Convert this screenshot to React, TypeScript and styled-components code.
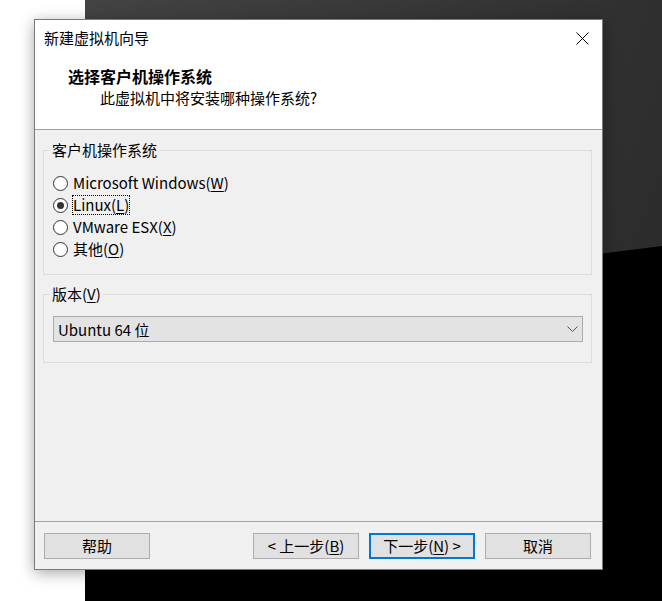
import React from "react";
import styled, { createGlobalStyle } from "styled-components";

const GlobalStyle = createGlobalStyle`
  html, body { margin: 0; padding: 0; background: #ffffff; }
  body { overflow: hidden; }
`;

const FONT = `"Noto Sans CJK SC", "Noto Sans", sans-serif`;

const Desktop = styled.div`
  position: relative;
  width: 662px;
  height: 601px;
  overflow: hidden;
  background: #ffffff;
  font-family: ${FONT};
`;

const Wallpaper = styled.svg`
  position: absolute;
  left: 85px;
  top: 0;
  display: block;
`;

const Window = styled.div`
  position: absolute;
  left: 34px;
  top: 19px;
  width: 569px;
  height: 551px;
  box-sizing: border-box;
  border: 1px solid #7a7a7a;
  background: #f0f0f0;
  box-shadow: 0 3px 14px rgba(0, 0, 0, 0.35);
  display: flex;
  flex-direction: column;
  font-size: 15px;
  color: #000;
`;

const TitleBar = styled.div`
  height: 36px;
  background: #ffffff;
  display: flex;
  align-items: center;
  justify-content: space-between;
  padding-left: 9px;
`;

const TitleText = styled.span`
  line-height: 20px;
`;

const CloseBtn = styled.div`
  width: 40px;
  height: 36px;
  display: flex;
  align-items: center;
  justify-content: center;
`;

const Header = styled.div`
  height: 73px;
  background: #ffffff;
  border-bottom: 1px solid #a0a0a0;
`;

const Heading = styled.div`
  margin: 10px 0 0 33px;
  font-size: 16px;
  font-weight: bold;
  line-height: 20px;
`;

const SubHeading = styled.div`
  margin: 2px 0 0 65px;
  line-height: 20px;
`;

const Body = styled.div`
  flex: 1;
  padding: 10px 10px 0 8px;
  display: flex;
  flex-direction: column;
`;

const Group = styled.fieldset<{ $gapTop?: number; $padBottom: number }>`
  margin: ${(p) => p.$gapTop ?? 0}px 0 0 0;
  border: 1px solid #dcdcdc;
  padding: 12px 8px ${(p) => p.$padBottom}px 9px;
  min-width: 0;
`;

const Legend = styled.legend`
  margin-left: -3px;
  padding: 0 2px;
  line-height: 20px;
  font-size: 15px;
`;

const RadioRow = styled.div`
  height: 22px;
  display: flex;
  align-items: center;
`;

const RadioCircle = styled.span<{ $checked: boolean }>`
  width: 15px;
  height: 15px;
  box-sizing: border-box;
  border: 1px solid #333333;
  border-radius: 50%;
  background: #ffffff;
  margin-right: 4px;
  display: flex;
  align-items: center;
  justify-content: center;
  &::after {
    content: "";
    display: ${(p) => (p.$checked ? "block" : "none")};
    width: 7px;
    height: 7px;
    border-radius: 50%;
    background: #333333;
  }
`;

const RadioLabel = styled.span<{ $focused?: boolean }>`
  line-height: 18px;
  padding: 0;
  border: 1px ${(p) => (p.$focused ? "dotted #000" : "solid transparent")};
  white-space: nowrap;
`;

const U = styled.span`
  text-decoration: underline;
  text-underline-offset: 2px;
`;

const Combo = styled.div`
  height: 26px;
  box-sizing: border-box;
  border: 1px solid #a9adb3;
  background: #e3e3e3;
  display: flex;
  align-items: center;
  justify-content: space-between;
  padding: 0 4px 0 4px;
`;

const Footer = styled.div`
  border-top: 1px solid #a0a0a0;
  padding: 11px 11px 10px 9px;
  display: flex;
  align-items: center;
`;

const Spacer = styled.div`
  flex: 1;
`;

const Button = styled.button<{ $primary?: boolean; $gap?: boolean }>`
  width: 106px;
  height: 26px;
  box-sizing: border-box;
  margin: 0 0 0 ${(p) => (p.$gap ? 10 : 0)}px;
  padding: 0;
  background: #e1e1e1;
  border: ${(p) => (p.$primary ? "2px solid #0078d7" : "1px solid #adadad")};
  font-family: ${FONT};
  font-size: 15px;
  color: #000;
  line-height: 20px;
  white-space: nowrap;
`;

const radios = [
  { label: "Microsoft Windows(", key: "W", checked: false },
  { label: "Linux(", key: "L", checked: true },
  { label: "VMware ESX(", key: "X", checked: false },
  { label: "其他(", key: "O", checked: false },
];

export default function App() {
  return (
    <Desktop>
      <GlobalStyle />
      <Wallpaper width={577} height={601} viewBox="0 0 577 601">
        <defs>
          <linearGradient id="wg" x1="0" y1="0" x2="1" y2="0.4">
            <stop offset="0" stopColor="#434343" />
            <stop offset="1" stopColor="#2c2c2c" />
          </linearGradient>
        </defs>
        <rect x="0" y="0" width="577" height="601" fill="url(#wg)" />
        <path d="M0,330 C180,300 380,270 577,246 L577,601 L0,601 Z" fill="#000000" />
      </Wallpaper>
      <Window>
        <TitleBar>
          <TitleText>新建虚拟机向导</TitleText>
          <CloseBtn>
            <svg width="13" height="13" viewBox="0 0 13 13">
              <path d="M0.5,0.5 L12.5,12.5 M12.5,0.5 L0.5,12.5" stroke="#000" strokeWidth="1" fill="none" />
            </svg>
          </CloseBtn>
        </TitleBar>
        <Header>
          <Heading>选择客户机操作系统</Heading>
          <SubHeading>此虚拟机中将安装哪种操作系统?</SubHeading>
        </Header>
        <Body>
          <Group $padBottom={14}>
            <Legend>客户机操作系统</Legend>
            {radios.map((r) => (
              <RadioRow key={r.key}>
                <RadioCircle $checked={r.checked} />
                <RadioLabel $focused={r.checked}>
                  {r.label}
                  <U>{r.key}</U>)
                </RadioLabel>
              </RadioRow>
            ))}
          </Group>
          <Group $gapTop={9} $padBottom={20}>
            <Legend>
              版本(<U>V</U>)
            </Legend>
            <Combo>
              <span>Ubuntu 64 位</span>
              <svg width="11" height="7" viewBox="0 0 11 7">
                <path d="M0.5,0.5 L5.5,5.5 L10.5,0.5" stroke="#555" strokeWidth="1" fill="none" />
              </svg>
            </Combo>
          </Group>
        </Body>
        <Footer>
          <Button>帮助</Button>
          <Spacer />
          <Button>
            &lt; 上一步(<U>B</U>)
          </Button>
          <Button $primary $gap>
            下一步(<U>N</U>) &gt;
          </Button>
          <Button $gap>取消</Button>
        </Footer>
      </Window>
    </Desktop>
  );
}
